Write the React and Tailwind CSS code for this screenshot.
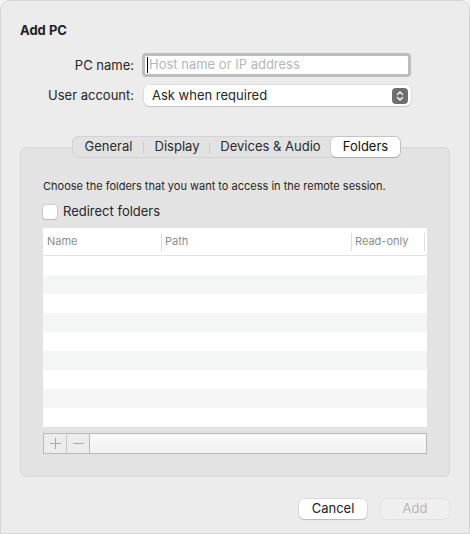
import { useState } from 'react';

const tabs = [
  { label: 'General', w: 'w-[71px]' },
  { label: 'Display', w: 'w-[66px]' },
  { label: 'Devices & Audio', w: 'w-[121px]' },
  { label: 'Folders', w: 'w-[69px]' },
];

const Stepper = () => (
  <div className="w-[16px] h-[16px] rounded-[4px] bg-[#6f6f6f] flex items-center justify-center">
    <svg width="8" height="12" viewBox="0 0 8 12" fill="none" stroke="white" strokeWidth="1.4" strokeLinecap="round" strokeLinejoin="round">
      <path d="M1.5 4.5 4 2l2.5 2.5" />
      <path d="M1.5 7.5 4 10l2.5-2.5" />
    </svg>
  </div>
);

const App = () => {
  const [redirect, setRedirect] = useState(false);
  const rows = Array.from({ length: 9 });

  return (
    <div className="w-[470px] h-[534px] bg-[#f2f2f2] font-['Inter',sans-serif] text-[#262626]">
      <div className="w-full h-full bg-[#ececec] rounded-t-[10px] border border-[#d6d6d6] px-[19px]">
        {/* Title */}
        <div className="pt-[21px] text-[13px] leading-[16px] font-bold text-[#222]">Add PC</div>

        {/* Form */}
        <div className="mt-[15px] flex flex-col">
          <div className="flex items-center h-[24px]">
            <label className="w-[114px] text-right text-[13px] pt-[2px]">PC name:</label>
            <div className="ml-[8px] w-[269px] h-[24px] rounded-[4px] border-[3px] border-[#bdbdbd] bg-white flex items-center">
              <span className="ml-[2px] w-px h-[16px] bg-black" />
              <span className="ml-[1px] text-[13px] text-[#b6b6b6]">Host name or IP address</span>
            </div>
          </div>
          <div className="flex items-center h-[21px] mt-[8px]">
            <label className="w-[114px] text-right text-[13px]">User account:</label>
            <div className="ml-[10px] w-[267px] h-[21px] rounded-[5px] bg-white shadow-[0_0_0_0.5px_rgba(0,0,0,0.12),0_1px_1px_rgba(0,0,0,0.12)] flex items-center justify-between pl-[8px] pr-[3px]">
              <span className="text-[13px]">Ask when required</span>
              <Stepper />
            </div>
          </div>
        </div>

        {/* Tab view */}
        <div className="mt-[30px]">
          <div className="relative z-10 ml-[52px] w-[329px] h-[22px] rounded-[6px] bg-[#e2e2e2] border border-[#d3d3d3] flex items-center text-[13px]">
            {tabs.map((t, i) => {
              const active = t.label === 'Folders';
              const nextActive = tabs[i + 1] && tabs[i + 1].label === 'Folders';
              return (
                <div key={t.label} className={`relative ${t.w} h-full flex items-center justify-center`}>
                  {active ? (
                    <div className="absolute inset-[0px] rounded-[5px] bg-white shadow-[0_0_0_0.5px_rgba(0,0,0,0.15),0_1px_1px_rgba(0,0,0,0.12)]" />
                  ) : null}
                  <span className={`relative ${active ? 'text-[#111]' : 'text-[#2a2a2a]'}`}>{t.label}</span>
                  {i < tabs.length - 1 && !active && !nextActive ? (
                    <span className="absolute right-0 top-[5px] w-px h-[11px] bg-[#cbcbcb]" />
                  ) : null}
                </div>
              );
            })}
          </div>

          <div className="-mt-[11px] w-[430px] h-[330px] rounded-[6px] bg-[#e3e3e3] border border-[#d9d9d9] pt-[31px] px-[22px]">
            <p className="text-[11px] leading-[14px] text-[#262626]">
              Choose the folders that you want to access in the remote session.
            </p>
            <div className="mt-[11px] flex items-center h-[16px] gap-[6px]" onClick={() => setRedirect(!redirect)}>
              <span className="w-[14px] h-[14px] rounded-[3px] bg-white shadow-[0_0_0_0.5px_rgba(0,0,0,0.2),0_1px_1px_rgba(0,0,0,0.1)]" />
              <span className="text-[13px]">Redirect folders</span>
            </div>

            {/* Table */}
            <div className="mt-[8px] w-[384px] bg-white">
              <div className="h-[28px] flex items-center border-b border-[#e2e2e2] text-[11px] text-[#8c8c8c]">
                <div className="w-[119px] h-[18px] flex items-center pl-[4px] border-r border-[#dedede]">Name</div>
                <div className="w-[190px] h-[18px] flex items-center pl-[3px] border-r border-[#dedede]">Path</div>
                <div className="w-[73px] h-[18px] flex items-center pl-[3px] border-r border-[#dedede]">Read-only</div>
              </div>
              {rows.map((_, i) => (
                <div key={i} className={`h-[19px] ${i % 2 === 1 ? 'bg-[#f4f5f5]' : 'bg-white'}`} />
              ))}
            </div>

            {/* Add / remove bar */}
            <div className="mt-[6px] w-[384px] h-[21px] flex border border-[#b9b9b9]">
              <div className="w-[23px] h-full flex items-center justify-center border-r border-[#c8c8c8] bg-[#ececec]">
                <svg width="11" height="11" viewBox="0 0 11 11" stroke="#a9a9a9" strokeWidth="1">
                  <path d="M5.5 0v11M0 5.5h11" />
                </svg>
              </div>
              <div className="w-[23px] h-full flex items-center justify-center border-r border-[#b9b9b9] bg-[#ececec]">
                <svg width="11" height="11" viewBox="0 0 11 11" stroke="#a9a9a9" strokeWidth="1">
                  <path d="M0 5.5h11" />
                </svg>
              </div>
              <div className="flex-1 h-full bg-gradient-to-b from-[#f9f9f9] to-[#f1f1f1]" />
            </div>
          </div>
        </div>

        {/* Buttons */}
        <div className="mt-[22px] flex justify-end gap-[14px] pr-[1px]">
          <button className="w-[68px] h-[20px] rounded-[5px] bg-white text-[13px] text-[#222] shadow-[0_0_0_0.5px_rgba(0,0,0,0.15),0_1px_1px_rgba(0,0,0,0.15)]">
            Cancel
          </button>
          <button className="w-[68px] h-[20px] rounded-[5px] bg-[#efefef] text-[13px] text-[#b8b8b8] shadow-[0_0_0_0.5px_rgba(0,0,0,0.08)]">
            Add
          </button>
        </div>
      </div>
    </div>
  );
};

export default App;
